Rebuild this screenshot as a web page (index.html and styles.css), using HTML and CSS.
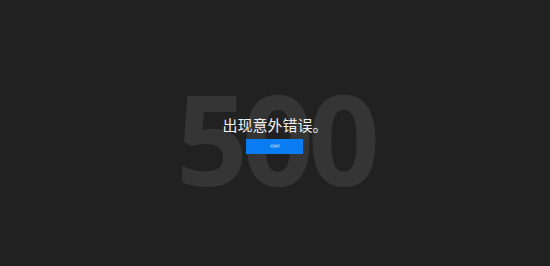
FILE: index.html
```html
<!DOCTYPE html>
<html lang="zh-CN">
<head>
<meta charset="utf-8">
<title>500</title>
<link rel="stylesheet" href="styles.css">
</head>
<body>
<main class="page">
  <div class="stage">
    <div class="code" aria-hidden="true">500</div>
    <div class="content">
      <h1 class="title">出现意外错误。</h1>
      <a class="btn" href="#">返回首页</a>
    </div>
  </div>
</main>
</body>
</html>
```
FILE: styles.css
```css
html, body {
  margin: 0;
  padding: 0;
  height: 100%;
  background: #212121;
}
.page {
  height: 100%;
  display: flex;
  align-items: center;
  justify-content: center;
  font-family: "Open Sans", "Noto Sans CJK SC", sans-serif;
}
.stage {
  position: relative;
  display: flex;
  align-items: center;
  justify-content: center;
  width: 220px;
  height: 120px;
  margin-top: 12px;
}
.code {
  position: absolute;
  left: 0;
  right: 0;
  top: 50%;
  transform: translateY(-50%);
  margin-top: -2px;
  text-align: center;
  font-family: "Open Sans", sans-serif;
  font-weight: 700;
  font-size: 126px;
  line-height: 1;
  letter-spacing: -6px;
  text-indent: 0;
  color: #353535;
  user-select: none;
}
.content {
  position: relative;
  display: flex;
  flex-direction: column;
  align-items: center;
  gap: 4px;
  margin-top: -10px;
}
.title {
  margin: 0;
  font-family: "Noto Sans CJK SC", sans-serif;
  font-weight: 400;
  font-size: 15px;
  line-height: 20px;
  color: #f2f2f2;
}
.btn {
  display: flex;
  align-items: center;
  justify-content: center;
  width: 57px;
  height: 15px;
  background: #0a7cf2;
  color: #e8f0ff;
  font-family: "Noto Sans CJK SC", sans-serif;
  font-size: 2.5px;
  text-decoration: none;
}
```
